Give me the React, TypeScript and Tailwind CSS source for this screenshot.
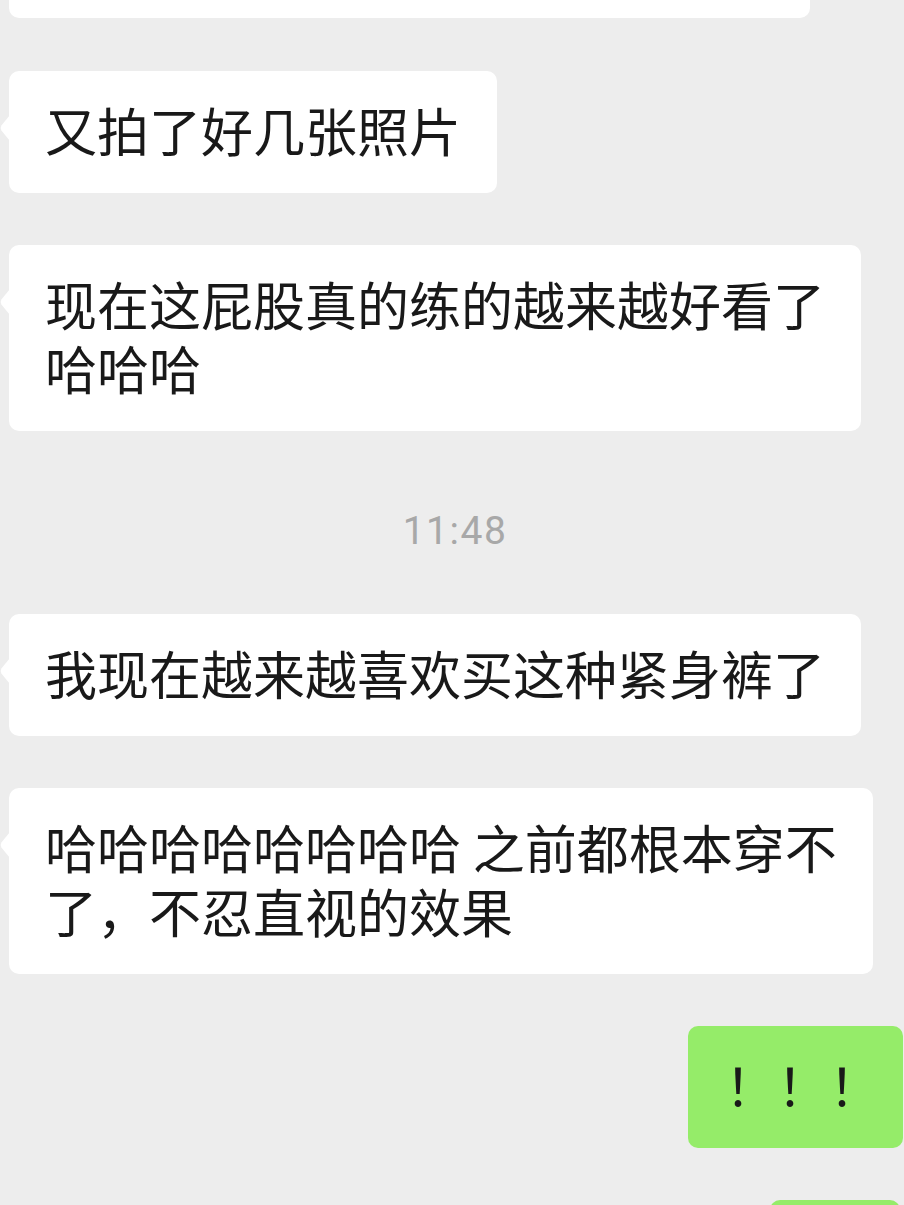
import type { ReactNode } from "react";

function Tail({ fill }: { fill: string }) {
  return (
    <svg
      className="absolute left-[-9px] top-[44px]"
      width="10"
      height="26"
      viewBox="0 0 10 26"
    >
      <path d="M10 0 L1.4 10.6 Q0 13 1.4 15.4 L10 26 Z" fill={fill} />
    </svg>
  );
}

function Bubble({ children }: { children: ReactNode }) {
  return (
    <div className="flex pl-[9px]">
      <div className="relative whitespace-nowrap rounded-[10px] bg-white px-[36px] pt-[27px] pb-[31px] text-[52px] leading-[64px] text-[#191919]">
        <Tail fill="#ffffff" />
        {children}
      </div>
    </div>
  );
}

export default function App() {
  return (
    <div className="h-[1205px] overflow-hidden bg-[#ededed] font-['Noto_Sans_CJK_SC','Noto_Sans',sans-serif]">
      {/* previous message, cut off by the top edge */}
      <div className="ml-[9px] h-[18px] w-[801px] rounded-b-[10px] bg-white" />

      <div className="mt-[53px] flex flex-col gap-[52px]">
        <Bubble>又拍了好几张照片</Bubble>
        <Bubble>
          现在这屁股真的练的越来越好看了
          <br />
          哈哈哈
        </Bubble>
      </div>

      {/* time divider */}
      <div className="mt-[77px] mb-[60px] pl-[6px] text-center font-['Roboto',sans-serif] text-[39px] leading-[46px] tracking-[1.5px] text-[#a8a8a8]">
        11:48
      </div>

      <div className="flex flex-col gap-[52px]">
        <Bubble>我现在越来越喜欢买这种紧身裤了</Bubble>
        <Bubble>
          哈哈哈哈哈哈哈哈 之前都根本穿不
          <br />
          了，不忍直视的效果
        </Bubble>

        <div className="flex justify-end pr-px">
          <div className="rounded-[10px] bg-[#95ec69] pl-[37px] pr-[22px] pt-[27px] pb-[31px] text-[52px] leading-[64px] text-[#191919]">
            ！！！
          </div>
        </div>

        <div className="flex justify-end pr-[4px]">
          <div className="h-[100px] w-[130px] rounded-[10px] bg-[#95ec69]" />
        </div>
      </div>
    </div>
  );
}
